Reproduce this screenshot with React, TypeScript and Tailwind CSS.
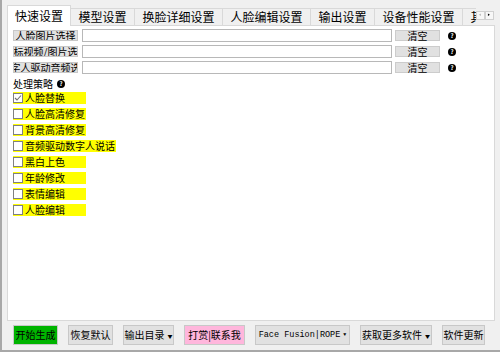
import React from "react";

const tabs = [
  { label: "快速设置", w: "w-[64px]" },
  { label: "模型设置", w: "w-[64px]" },
  { label: "换脸详细设置", w: "w-[88px]" },
  { label: "人脸编辑设置", w: "w-[88px]" },
  { label: "输出设置", w: "w-[64px]" },
  { label: "设备性能设置", w: "w-[88px]" },
  { label: "其他设置", w: "w-[64px]" },
];

const fileRows = ["人脸图片选择", "目标视频/图片选择", "数字人驱动音频选择"];

const options = [
  { label: "人脸替换", checked: true },
  { label: "人脸高清修复", checked: false },
  { label: "背景高清修复", checked: false },
  { label: "音频驱动数字人说话", checked: false },
  { label: "黑白上色", checked: false },
  { label: "年龄修改", checked: false },
  { label: "表情编辑", checked: false },
  { label: "人脸编辑", checked: false },
];

const Help = () => (
  <span className="inline-flex h-[8px] w-[8px] shrink-0 items-center justify-center rounded-full bg-black text-[6px] font-bold leading-none text-white">
    ?
  </span>
);

const Caret = () => <span className="ml-[3px] text-[5px] leading-none">▼</span>;

const btn =
  "flex h-[20px] shrink-0 items-center justify-center whitespace-nowrap border border-[#c8c8c8] leading-none";

export default function App() {
  const font = { fontFamily: '"Noto Sans CJK SC", "Liberation Sans", sans-serif' };
  return (
    <div
      className="flex h-[352px] w-[500px] flex-col overflow-hidden border-b-2 border-l-2 border-[#a8a8a8] bg-[#f0f0f0] text-[10px] leading-none text-black"
      style={font}
    >
      {/* tab strip */}
      <div className="flex h-[25px] items-end pl-[5px]">
        <div className="relative z-10 -mb-px flex h-[21px] w-[469px] items-end overflow-hidden">
          {tabs.map((t, i) =>
            i === 0 ? (
              <div
                key={t.label}
                className={`${t.w} flex h-[21px] shrink-0 items-center justify-center whitespace-nowrap border border-b-0 border-[#d9d9d9] bg-white pb-px text-[12px]`}
              >
                {t.label}
              </div>
            ) : (
              <div
                key={t.label}
                className={`${t.w} mb-px flex h-[17px] shrink-0 items-center justify-center whitespace-nowrap border-r border-t border-[#d9d9d9] text-[12px]`}
              >
                {t.label}
              </div>
            )
          )}
        </div>
        <div className="mb-[5px] flex h-[9px] shrink-0 items-center">
          <svg width="9" height="9" viewBox="0 0 9 9" className="border border-[#d0d0d0] bg-[#f7f7f7]">
            <path d="M5 2 L2.5 3.5 L5 5 Z" fill="#b8b8b8" />
          </svg>
          <svg width="9" height="9" viewBox="0 0 9 9" className="border border-[#d0d0d0] bg-[#f7f7f7]">
            <path d="M2.5 2 L5 3.5 L2.5 5 Z" fill="#000" />
          </svg>
        </div>
      </div>

      {/* panel */}
      <div className="ml-[5px] mr-[5px] flex h-[296px] shrink-0 flex-col border border-[#d9d9d9] bg-white pl-[5px] pt-[3px]">
        <div className="flex flex-col gap-[3px]">
          {fileRows.map((r) => (
            <div key={r} className="flex h-[13px] items-center">
              <div className="flex h-[11px] w-[65px] shrink-0 items-center justify-center overflow-hidden whitespace-nowrap border border-[#c8c8c8] bg-[#e1e1e1]">
                {r}
              </div>
              <div className="ml-[4px] h-[13px] w-[310px] shrink-0 border border-[#b8b8b8] bg-white" />
              <div className="ml-[3px] flex h-[11px] w-[45px] shrink-0 items-center justify-center border border-[#cccccc] bg-[#e1e1e1]">
                清空
              </div>
              <div className="ml-[8px] flex items-center">
                <Help />
              </div>
            </div>
          ))}
        </div>

        <div className="mt-[4px] flex h-[12px] items-center gap-[4px]">
          处理策略
          <Help />
        </div>

        <div className="mt-[2px] flex flex-col gap-[4px]">
          {options.map((o) => (
            <div key={o.label} className="flex">
              <div className="flex h-[12px] min-w-[73px] items-center gap-[2px] whitespace-nowrap bg-[#ffff00] pr-[1px]">
                <span className="flex h-[10px] w-[10px] shrink-0 items-center justify-center border border-[#808080] bg-white">
                  {o.checked && (
                    <svg width="8" height="8" viewBox="0 0 8 8">
                      <path d="M1 4 L3 6 L7 1.5" fill="none" stroke="#707070" strokeWidth="1.1" />
                    </svg>
                  )}
                </span>
                {o.label}
              </div>
            </div>
          ))}
        </div>
      </div>

      {/* bottom buttons */}
      <div className="mt-[4px] flex h-[20px] items-center gap-[10px] pl-[11px]">
        <div className={`${btn} w-[45px] border-[#009000] bg-[#00b400]`}>开始生成</div>
        <div className={`${btn} w-[45px] bg-[#e1e1e1]`}>恢复默认</div>
        <div className={`${btn} w-[51px] bg-[#e1e1e1]`}>
          输出目录
          <Caret />
        </div>
        <div className={`${btn} w-[61px] bg-[#ffb6dc]`}>打赏|联系我</div>
        <div
          className={`${btn} w-[95px] bg-[#e1e1e1] text-[8.5px]`}
          style={{ fontFamily: '"Liberation Mono", monospace' }}
        >
          Face Fusion|ROPE
          <Caret />
        </div>
        <div className={`${btn} w-[72px] bg-[#e1e1e1]`}>
          获取更多软件
          <Caret />
        </div>
        <div className={`${btn} w-[43px] bg-[#e1e1e1]`}>软件更新</div>
      </div>
    </div>
  );
}
